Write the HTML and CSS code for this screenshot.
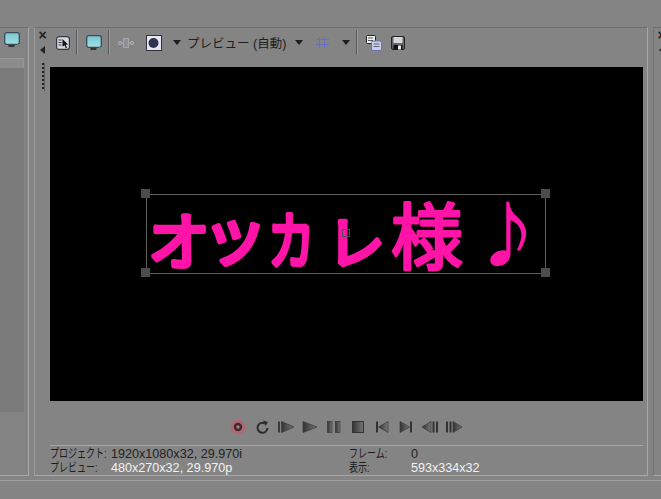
FILE: index.html
```html
<!DOCTYPE html>
<html lang="ja">
<head>
<meta charset="utf-8">
<title>プレビュー</title>
<link rel="stylesheet" href="styles.css">
</head>
<body>
<svg class="defs" width="0" height="0" aria-hidden="true">
  <defs>
    <linearGradient id="metal" x1="0" y1="0" x2="1" y2="0"><stop offset="0" stop-color="#333"/><stop offset="1" stop-color="#777"/></linearGradient>
    <linearGradient id="screen" x1="0" y1="0" x2="0" y2="1"><stop offset="0" stop-color="#74c6d4"/><stop offset="1" stop-color="#a6e0e0"/></linearGradient>
  </defs>
</svg>
<div class="app">
  <div class="workspace">
    <aside class="side side-left">
      <div class="side-tools">
        <svg class="ico" viewBox="0 0 16 16" width="16" height="16"><rect x=".7" y=".7" width="14.600" height="11.600" rx="2" fill="url(#screen)" stroke="#3d4a58" stroke-width="1.300"/><path d="M4.500 14h6" stroke="#333" stroke-width="2"/><rect x="13" y="12" width="2" height="2" fill="#4f9a5a"/></svg>
      </div>
      <div class="side-tab"></div>
      <div class="side-body"></div>
    </aside>
    <main class="panel">
      <div class="panel-grip">
        <span class="close">×</span>
        <span class="arrow-left"></span>
        <span class="dots"></span>
      </div>
      <div class="panel-main">
        <div class="toolbar">
          <svg class="ico tool-pick" viewBox="0 0 14 14" width="14" height="14"><rect x=".6" y=".6" width="12.800" height="12.800" rx="2.500" fill="#d4d9e2" stroke="#343a48" stroke-width="1.200"/><path d="M2.500 4h3M2.500 6.500h3M2.500 9h3" stroke="#333"/><path d="M6.500 3l5.500 5.500-2.300.2 1.300 3-1.200.5-1.300-3-2 1.500z" fill="#111"/></svg>
          <span class="sep sep-a"></span>
          <svg class="ico" viewBox="0 0 16 16" width="16" height="16"><rect x=".7" y=".7" width="14.600" height="11.600" rx="2" fill="url(#screen)" stroke="#3d4a58" stroke-width="1.300"/><path d="M4.500 14h6" stroke="#333" stroke-width="2"/><rect x="13" y="12" width="2" height="2" fill="#4f9a5a"/></svg>
          <span class="sep sep-a"></span>
          <svg class="ico tool-split" viewBox="0 0 16 10" width="16" height="10"><circle cx="2" cy="5" r="1.500" fill="none" stroke="#b4b8bc"/><circle cx="14" cy="5" r="1.500" fill="none" stroke="#b4b8bc"/><path d="M3.500 5H5.500M10.500 5h2" stroke="#a8acb0"/><rect x="5.500" y=".5" width="5" height="9" fill="#8c9096" stroke="#a5a9ae"/></svg>
          <svg class="ico tool-mode" viewBox="0 0 16 16" width="16" height="16"><rect x=".5" y=".5" width="15" height="15" fill="#e4e6f2" stroke="#333"/><circle cx="7.500" cy="8" r="5" fill="#2e3350"/></svg>
          <span class="caret"></span>
          <span class="preview-label">プレビュー (自動)</span>
          <span class="caret caret-b"></span>
          <svg class="ico tool-grid" viewBox="0 0 13 11" width="13" height="11"><path d="M3.500 0v11M8.500 0v11M0 2.500h13M0 7.500h13" stroke="#6470c8"/></svg>
          <span class="caret caret-c"></span>
          <span class="sep sep-b"></span>
          <svg class="ico" viewBox="0 0 16 16" width="16" height="16"><rect x=".5" y=".5" width="9" height="8" rx="1" fill="#eee" stroke="#222"/><path d="M2 3h5M2 5.500h5" stroke="#555"/><rect x="5.500" y="6" width="10" height="9.500" rx="1.500" fill="#c8cfea" stroke="#6a70b0"/><path d="M7.500 9h6M7.500 11.500h6" stroke="#667"/></svg>
          <svg class="ico tool-save" viewBox="0 0 14 14" width="14" height="14"><rect x=".5" y=".5" width="13" height="13" rx="1.500" fill="#62666c" stroke="#222"/><rect x="2.500" y="1" width="9" height="6" fill="#d4d6da"/><rect x="2.500" y="9" width="9" height="4.500" fill="#111"/><rect x="7" y="9.500" width="3" height="4" fill="#eee"/></svg>
        </div>
        <div class="viewport">
          <svg class="title-art" viewBox="0 0 593 334" width="593" height="334">
            <text class="title-glyphs" x="98" y="198">オ</text>
            <text class="title-glyphs g-tsu" x="152" y="193">ッ</text>
            <text class="title-glyphs g-ka" transform="translate(218 197) scale(.75 1)">カ</text>
            <text class="title-glyphs g-re" x="277" y="197">レ</text>
            <text class="title-glyphs g-yo" x="341" y="196">様</text>
            <text class="title-glyphs g-note" x="424" y="193">♪</text>
          </svg>
          <div class="overlay">
            <span class="handle h-tl"></span><span class="handle h-tr"></span>
            <span class="handle h-bl"></span><span class="handle h-br"></span>
            <span class="center"></span>
          </div>
        </div>
        <div class="transport">
          <svg class="tbtn" viewBox="0 0 16 16" width="16" height="16"><circle cx="8" cy="8" r="7.500" fill="#ad6a72"/><circle cx="8" cy="8" r="4.200" fill="#3c2a2e"/><circle cx="8" cy="8" r="1.700" fill="#b07a80"/></svg>
          <svg class="tbtn" viewBox="0 0 16 16" width="16" height="16"><path d="M10.800 4.300A5 5 0 1 0 13.500 9" fill="none" stroke="#2c2c2c" stroke-width="2"/><path d="M9 1.500l5 1.500-2.500 4z" fill="#2c2c2c"/></svg>
          <svg class="tbtn" viewBox="0 0 16 16" width="16" height="16"><rect x="0" y="2.500" width="2" height="11" fill="#3a3a3a"/><path d="M3.500 2.500l12.500 5.500-12.500 5.500z" fill="url(#metal)" stroke="#3a3a3a" stroke-width=".7"/></svg>
          <svg class="tbtn" viewBox="0 0 16 16" width="16" height="16"><path d="M1 2.500l14 5.500-14 5.500z" fill="url(#metal)" stroke="#3a3a3a" stroke-width=".7"/></svg>
          <svg class="tbtn" viewBox="0 0 16 16" width="16" height="16"><rect x="1.500" y="2.500" width="4.500" height="11" fill="url(#metal)" stroke="#333" stroke-width=".6"/><rect x="9.500" y="2.500" width="4.500" height="11" fill="url(#metal)" stroke="#333" stroke-width=".6"/></svg>
          <svg class="tbtn" viewBox="0 0 16 16" width="16" height="16"><rect x="2.500" y="2.500" width="11" height="11" fill="url(#metal)" stroke="#333"/></svg>
          <svg class="tbtn" viewBox="0 0 16 16" width="16" height="16"><rect x="2" y="2.500" width="2" height="11" fill="#333"/><path d="M14 2.500l-9.500 5.500 9.500 5.500z" fill="url(#metal)" stroke="#3a3a3a" stroke-width=".7"/></svg>
          <svg class="tbtn" viewBox="0 0 16 16" width="16" height="16"><rect x="12" y="2.500" width="2" height="11" fill="#333"/><path d="M2 2.500l9.500 5.500-9.500 5.500z" fill="url(#metal)" stroke="#3a3a3a" stroke-width=".7"/></svg>
          <svg class="tbtn" viewBox="0 0 16 16" width="16" height="16"><path d="M9 2.500l-9 5.500 9 5.500z" fill="url(#metal)" stroke="#3a3a3a" stroke-width=".7"/><rect x="10.500" y="2.500" width="2" height="11" fill="#333"/><rect x="14" y="2.500" width="2" height="11" fill="#333"/></svg>
          <svg class="tbtn" viewBox="0 0 16 16" width="16" height="16"><rect x="0" y="2.500" width="2" height="11" fill="#333"/><rect x="3.500" y="2.500" width="2" height="11" fill="#333"/><path d="M7 2.500l9 5.500-9 5.500z" fill="url(#metal)" stroke="#3a3a3a" stroke-width=".7"/></svg>
        </div>
        <div class="info">
          <div class="info-col info-col-a">
            <div class="info-row"><span class="info-key"><span class="key-text">プロジェクト:</span></span><span class="info-val">1920x1080x32, 29.970i</span></div>
            <div class="info-row"><span class="info-key"><span class="key-text">プレビュー:</span></span><span class="info-val light">480x270x32, 29.970p</span></div>
          </div>
          <div class="info-col">
            <div class="info-row"><span class="info-key key-b"><span class="key-text">フレーム:</span></span><span class="info-val">0</span></div>
            <div class="info-row"><span class="info-key key-b"><span class="key-text">表示:</span></span><span class="info-val light">593x334x32</span></div>
          </div>
        </div>
      </div>
    </main>
    <aside class="side side-right">
      <div class="panel-grip">
        <span class="close">×</span>
        <span class="arrow-left"></span>
        <span class="dots"></span>
      </div>
    </aside>
  </div>
  <div class="statusbar"></div>
</div>
</body>
</html>
```
FILE: styles.css
```css
* { box-sizing: border-box; }
html, body { margin: 0; padding: 0; height: 100%; }
body {
  background: #848484;
  font-family: "Liberation Sans", "Noto Sans CJK JP", sans-serif;
  color: #1c1c1c;
  overflow: hidden;
}
.defs { position: absolute; }
.app { width: 661px; height: 499px; display: flex; flex-direction: column; }
.workspace { height: 476px; display: flex; padding-top: 27px; flex: none; }
.side, .panel { border-top: 1px solid #6e6e6e; border-bottom: 1px solid #a8a8a8; }

.side-left { width: 29px; border-right: 1px solid #a8a8a8; display: flex; flex-direction: column; flex: none; }
.side-tools { height: 30px; padding: 4px 0 0 4px; }
.side-tab { width: 24px; height: 10px; background: #8c8c8c; border-top: 1px solid #9a9a9a; border-right: 1px solid #949494; }
.side-body { width: 24px; height: 344px; background: #7a7a7a; }

.ico { display: block; flex: none; }

.panel {
  margin-left: 5px;
  width: 614px;
  flex: none;
  display: flex;
  border-left: 1px solid #9c9c9c;
  border-right: 1px solid #a8a8a8;
}
.panel-grip { width: 15px; display: flex; flex-direction: column; align-items: center; flex: none; padding-top: 1px; }
.close { font: bold 14px/12px "Liberation Sans", sans-serif; color: #222; height: 12px; }
.arrow-left {
  margin-top: 5px; width: 0; height: 0; flex: none;
  border-top: 4px solid transparent; border-bottom: 4px solid transparent; border-right: 5px solid #222;
}
.dots {
  margin-top: 9px; width: 2px; height: 28px; flex: none;
  background: repeating-linear-gradient(#222 0 2px, transparent 2px 4px);
  box-shadow: 1px 0 0 #5c5c5c;
}

.panel-main { width: 593px; display: flex; flex-direction: column; flex: none; }
.toolbar { height: 39px; display: flex; align-items: center; padding: 0 0 10px 6px; flex: none; }
.sep { width: 1px; height: 25px; background: #5a5a5a; box-shadow: 1px 0 0 #9c9c9c; flex: none; }
.sep-a { margin: 0 9px 0 6px; }
.tool-split { margin-right: 12px; }
.tool-mode { margin-right: 11px; }
.caret { width: 0; height: 0; border-left: 4px solid transparent; border-right: 4px solid transparent; border-top: 5px solid #1e1e1e; flex: none; }
.preview-label { font-size: 12.500px; color: #1e1e1e; margin-left: 6px; width: 108px; white-space: nowrap; flex: none; }
.caret-b { margin-right: 13px; }
.caret-c { margin-left: 13px; }
.sep-b { margin: 0 9px 0 6px; }
.tool-save { margin-left: 9px; }

.viewport { width: 593px; height: 334px; background: #000; position: relative; flex: none; }
.title-art { position: absolute; left: 0; top: 0; display: block; }
.title-glyphs {
  font-family: "Noto Sans CJK JP", sans-serif;
  font-size: 62px;
  font-weight: 400;
  fill: #ff14a8;
  stroke: #ff14a8;
  stroke-width: 4.500px;
  stroke-linejoin: round;
  stroke-linecap: round;
}
.g-tsu { font-size: 66px; }
.g-re { font-size: 58px; }
.g-yo { font-size: 72px; stroke-width: 3px; }
.g-note { font-size: 68px; stroke-width: 1.500px; }

.overlay { position: absolute; left: 96px; top: 127px; width: 400px; height: 80px; border: 1px solid #5e5e5e; }
.handle { position: absolute; width: 9px; height: 9px; background: #4c4c4c; }
.h-tl { left: -6px; top: -6px; }
.h-tr { right: -5px; top: -6px; }
.h-bl { left: -6px; bottom: -4px; }
.h-br { right: -5px; bottom: -4px; }
.center { position: absolute; left: 195px; top: 34px; width: 8px; height: 8px; border: 1px solid #5a4a55; }

.transport { height: 45px; padding: 7px 0 0 180px; display: flex; align-items: center; gap: 8px; flex: none; border-bottom: 1px solid #a8a8a8; }
.tbtn { display: block; flex: none; }

.info { display: flex; font-size: 12.600px; line-height: 14px; padding-top: 1px; }
.info-col-a { width: 299px; flex: none; }
.info-row { display: flex; white-space: nowrap; }
.info-key { width: 61px; flex: none; font-size: 12.500px; }
.key-text { display: inline-block; transform: scaleX(.72); transform-origin: left center; }
.key-b { width: 62px; }
.info-val { color: #222; }
.light { color: #f2f2f2; }

.side-right { width: 8px; margin-left: 5px; border-left: 1px solid #747474; overflow: hidden; flex: none; }
.statusbar { margin-top: 4px; flex: 1; border-top: 1px solid #a0a0a0; }
```
